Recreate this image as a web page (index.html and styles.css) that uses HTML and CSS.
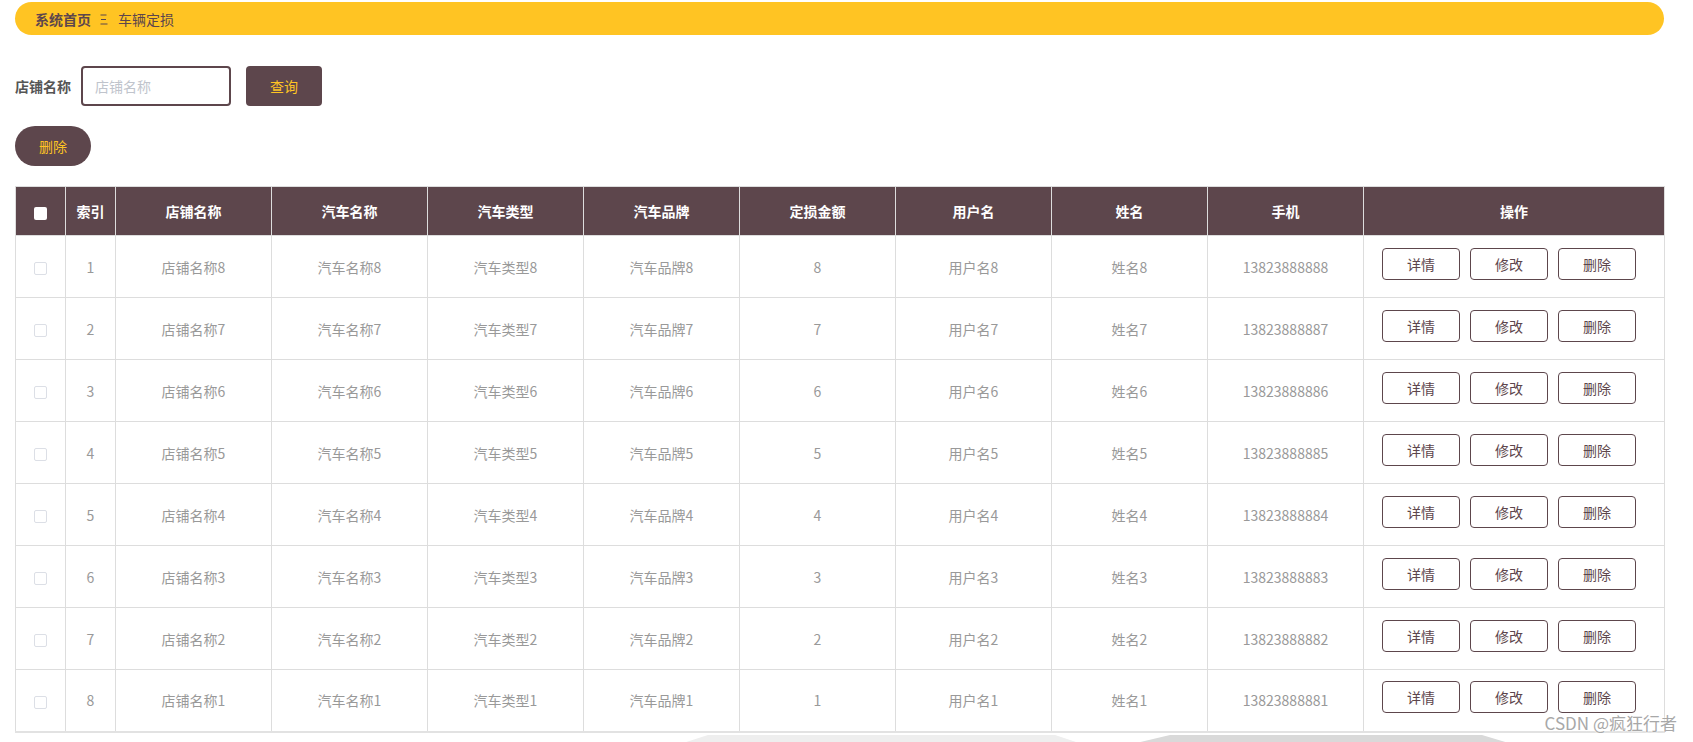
FILE: index.html
```html
<!DOCTYPE html>
<html lang="zh-CN">
<head>
<meta charset="utf-8">
<title>车辆定损</title>
<link rel="stylesheet" href="styles.css">
</head>
<body>
<div class="page">
  <div class="crumb">
    <span class="crumb-home">系统首页</span>
    <svg class="crumb-sep" width="8" height="11" viewBox="0 0 8 11"><path d="M0.5 1H6.5M1 5.5H6M0.5 10H7.5" stroke="#5d464c" stroke-width="1.1" fill="none"/></svg>
    <span class="crumb-cur">车辆定损</span>
  </div>

  <div class="search">
    <span class="search-label">店铺名称</span>
    <input class="search-input" type="text" placeholder="店铺名称">
    <button class="btn-query">查询</button>
  </div>

  <div class="actions">
    <button class="btn-del">删除</button>
  </div>

  <table class="grid">
    <colgroup>
      <col class="c-check"><col class="c-idx">
      <col class="c-mid"><col class="c-mid"><col class="c-mid"><col class="c-mid">
      <col class="c-mid"><col class="c-mid"><col class="c-mid"><col class="c-mid">
      <col class="c-op">
    </colgroup>
    <thead>
      <tr>
        <th><span class="hbox"></span></th>
        <th>索引</th>
        <th>店铺名称</th>
        <th>汽车名称</th>
        <th>汽车类型</th>
        <th>汽车品牌</th>
        <th>定损金额</th>
        <th>用户名</th>
        <th>姓名</th>
        <th>手机</th>
        <th>操作</th>
      </tr>
    </thead>
    <tbody>
      <tr><td><span class="rbox"></span></td><td>1</td><td>店铺名称8</td><td>汽车名称8</td><td>汽车类型8</td><td>汽车品牌8</td><td>8</td><td>用户名8</td><td>姓名8</td><td>13823888888</td><td class="op"><div class="ops"><button>详情</button><button>修改</button><button>删除</button></div></td></tr>
      <tr><td><span class="rbox"></span></td><td>2</td><td>店铺名称7</td><td>汽车名称7</td><td>汽车类型7</td><td>汽车品牌7</td><td>7</td><td>用户名7</td><td>姓名7</td><td>13823888887</td><td class="op"><div class="ops"><button>详情</button><button>修改</button><button>删除</button></div></td></tr>
      <tr><td><span class="rbox"></span></td><td>3</td><td>店铺名称6</td><td>汽车名称6</td><td>汽车类型6</td><td>汽车品牌6</td><td>6</td><td>用户名6</td><td>姓名6</td><td>13823888886</td><td class="op"><div class="ops"><button>详情</button><button>修改</button><button>删除</button></div></td></tr>
      <tr><td><span class="rbox"></span></td><td>4</td><td>店铺名称5</td><td>汽车名称5</td><td>汽车类型5</td><td>汽车品牌5</td><td>5</td><td>用户名5</td><td>姓名5</td><td>13823888885</td><td class="op"><div class="ops"><button>详情</button><button>修改</button><button>删除</button></div></td></tr>
      <tr><td><span class="rbox"></span></td><td>5</td><td>店铺名称4</td><td>汽车名称4</td><td>汽车类型4</td><td>汽车品牌4</td><td>4</td><td>用户名4</td><td>姓名4</td><td>13823888884</td><td class="op"><div class="ops"><button>详情</button><button>修改</button><button>删除</button></div></td></tr>
      <tr><td><span class="rbox"></span></td><td>6</td><td>店铺名称3</td><td>汽车名称3</td><td>汽车类型3</td><td>汽车品牌3</td><td>3</td><td>用户名3</td><td>姓名3</td><td>13823888883</td><td class="op"><div class="ops"><button>详情</button><button>修改</button><button>删除</button></div></td></tr>
      <tr><td><span class="rbox"></span></td><td>7</td><td>店铺名称2</td><td>汽车名称2</td><td>汽车类型2</td><td>汽车品牌2</td><td>2</td><td>用户名2</td><td>姓名2</td><td>13823888882</td><td class="op"><div class="ops"><button>详情</button><button>修改</button><button>删除</button></div></td></tr>
      <tr><td><span class="rbox"></span></td><td>8</td><td>店铺名称1</td><td>汽车名称1</td><td>汽车类型1</td><td>汽车品牌1</td><td>1</td><td>用户名1</td><td>姓名1</td><td>13823888881</td><td class="op"><div class="ops"><button>详情</button><button>修改</button><button>删除</button></div></td></tr>
    </tbody>
  </table>

  <div class="floor">
    <svg width="1693" height="11" viewBox="0 0 1693 11">
      <polygon points="680,11 708,2 1055,2 1082,11" fill="#eeeeee"/>
      <polygon points="1132,11 1170,2 1482,2 1512,11" fill="#d9d9d9"/>
    </svg>
  </div>
</div>
<div class="watermark">CSDN @疯狂行者</div>
</body>
</html>
```

FILE: styles.css
```css
* { box-sizing: border-box; }

html, body {
  margin: 0;
  padding: 0;
  background: #ffffff;
  height: 742px;
  overflow: hidden;
}

body {
  font-family: "Noto Sans CJK SC", "Noto Sans", sans-serif;
  font-size: 14px;
  color: #5d464c;
  position: relative;
}

.page {
  padding: 2px 29px 0 15px;
}

.crumb {
  height: 33px;
  border-radius: 17px;
  background: #ffc423;
  display: flex;
  align-items: center;
  padding-left: 20px;
  color: #5d464c;
  line-height: 1;
}

.crumb-home { font-weight: 700; }

.crumb-sep {
  margin: 1px 10px 0 9px;
  display: block;
}

.crumb-cur { font-weight: 400; }

.search {
  margin-top: 31px;
  height: 40px;
  display: flex;
  align-items: center;
}

.search-label {
  font-weight: 700;
  color: #555555;
  margin-right: 10px;
}

.search-input {
  width: 150px;
  height: 40px;
  border: 2px solid #5d464c;
  border-radius: 4px;
  padding: 0 12px;
  font-family: inherit;
  font-size: 14px;
  color: #606266;
  outline: none;
}

.search-input::placeholder { color: #c0c4cc; }

.btn-query {
  margin-left: 15px;
  width: 76px;
  height: 40px;
  border: none;
  border-radius: 4px;
  background: #5d464c;
  color: #ffc423;
  font-family: inherit;
  font-size: 14px;
  padding: 0;
}

.actions {
  margin-top: 20px;
  height: 40px;
}

.btn-del {
  width: 76px;
  height: 40px;
  border: none;
  border-radius: 20px;
  background: #5d464c;
  color: #ffc423;
  font-family: inherit;
  font-size: 14px;
  padding: 0;
}

.grid {
  margin-top: 20px;
  width: 1649px;
  border-collapse: collapse;
  table-layout: fixed;
  border: 1px solid #dddddd;
  border-bottom: 2px solid #e2e2e2;
}

.c-check { width: 50px; }
.c-idx { width: 50px; }
.c-mid { width: 156px; }
.c-op { width: 301px; }

.grid th {
  height: 49px;
  background: #5d464c;
  color: #ffffff;
  font-weight: 700;
  font-size: 14px;
  border: 1px solid #dddddd;
  text-align: center;
  padding: 0;
}

.grid td {
  height: 62px;
  border: 1px solid #dddddd;
  color: #999999;
  text-align: center;
  font-size: 14px;
  padding: 0;
}

.hbox {
  display: inline-block;
  width: 13px;
  height: 13px;
  background: #ffffff;
  border-radius: 2px;
  vertical-align: middle;
}

.rbox {
  display: inline-block;
  width: 13px;
  height: 13px;
  background: #ffffff;
  border: 1px solid #dcdfe6;
  border-radius: 2px;
  vertical-align: middle;
}

.grid td.op {
  text-align: left;
  padding-left: 18px;
}

.ops {
  display: flex;
  gap: 10px;
  margin-bottom: 6px;
}

.ops button {
  width: 78px;
  height: 32px;
  border: 1px solid #5d464c;
  border-radius: 4px;
  background: #ffffff;
  color: #5d464c;
  font-family: inherit;
  font-size: 14px;
  padding: 0;
}

.floor {
  margin-left: -15px;
  height: 11px;
}

.floor svg { display: block; }

.watermark {
  position: absolute;
  right: 16px;
  top: 711px;
  font-size: 17px;
  color: #a8a8a8;
  text-shadow: 0 0 2px #ffffff, 0 0 2px #ffffff;
  letter-spacing: 0;
  line-height: 24px;
}
```
